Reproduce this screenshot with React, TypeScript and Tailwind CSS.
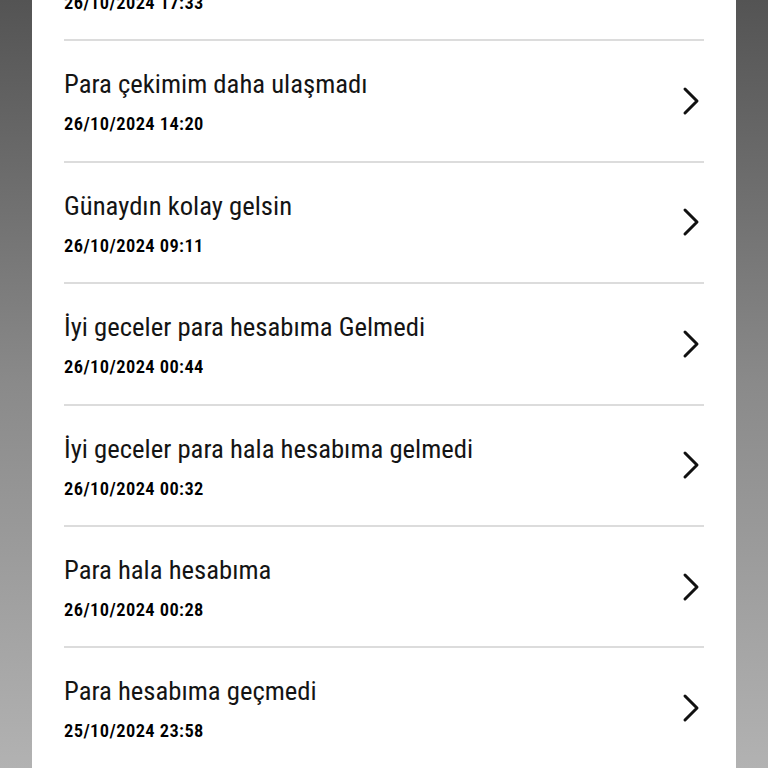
const items = [
  { title: "Para hesabıma ulaşmadı", date: "26/10/2024 17:33" },
  { title: "Para çekimim daha ulaşmadı", date: "26/10/2024 14:20" },
  { title: "Günaydın kolay gelsin", date: "26/10/2024 09:11" },
  { title: "İyi geceler para hesabıma Gelmedi", date: "26/10/2024 00:44" },
  { title: "İyi geceler para hala hesabıma gelmedi", date: "26/10/2024 00:32" },
  { title: "Para hala hesabıma", date: "26/10/2024 00:28" },
  { title: "Para hesabıma geçmedi", date: "25/10/2024 23:58" },
];

function Chevron() {
  return (
    <svg width="20" height="30" viewBox="0 0 20 30" fill="none" className="shrink-0">
      <path d="M4 3 L16 15 L4 27" stroke="#111" strokeWidth="3" strokeLinecap="round" strokeLinejoin="round" />
    </svg>
  );
}

export default function App() {
  return (
    <div className="h-[768px] overflow-hidden bg-gradient-to-b from-[#545454] via-[#8a8a8a] to-[#b2b2b2] px-8 font-['Roboto_Condensed',sans-serif]">
      <div className="h-full bg-white px-8 overflow-hidden">
        <div className="-mt-[80px]">
          {items.map((it) => (
            <div key={it.date} className="h-[121.4px] border-b-2 border-[#dcdcdc] flex items-start justify-between">
              <div className="pt-[27px] flex flex-col gap-[12px]">
                <div className="text-[26.7px] leading-[32px] text-[#141414]">{it.title}</div>
                <div className="text-[18.5px] leading-[24px] font-semibold text-black tracking-[0.4px]">{it.date}</div>
              </div>
              <div className="self-center mr-[3px]">
                <Chevron />
              </div>
            </div>
          ))}
        </div>
      </div>
    </div>
  );
}
